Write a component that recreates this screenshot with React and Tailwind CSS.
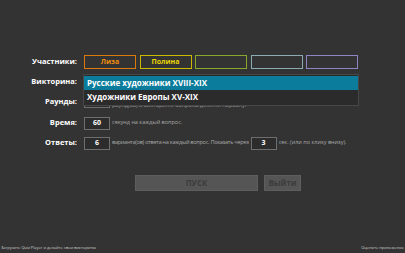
import { useState } from "react"

const players = [
  { name: "Лиза", border: "border-[#d97a0a]", text: "text-[#f08c10]" },
  { name: "Полина", border: "border-[#c9b800]", text: "text-[#e8d400]" },
  { name: "", border: "border-[#87a82c]", text: "text-[#87a82c]" },
  { name: "", border: "border-[#8aaab4]", text: "text-[#8aaab4]" },
  { name: "", border: "border-[#9283c4]", text: "text-[#9283c4]" },
]

const quizzes = ["Русские художники XVIII-XIX", "Художники Европы XV-XIX"]

function Label({ children }) {
  return <div className="text-right text-[7.5px] font-bold text-white leading-none">{children}</div>
}

function NumberBox({ value }) {
  return (
    <div className="flex h-[13px] w-[26px] shrink-0 items-center justify-center border border-[#6e6e6e] bg-[#2c2c2c] text-[7px] font-bold text-white">
      {value}
    </div>
  )
}

function Hint({ children, tight }) {
  return (
    <span className={`text-[5.5px] text-[#a9a9a9] leading-none whitespace-nowrap ${tight ? "tracking-[-0.25px]" : ""}`}>
      {children}
    </span>
  )
}

export default function App() {
  const [selected] = useState(0)

  return (
    <div className="flex h-[253px] w-[405px] flex-col overflow-hidden bg-[#333333] font-['Open_Sans',sans-serif]">
      <div className="flex flex-col gap-[6px] pt-[55px]">
        {/* participants */}
        <div className="grid h-[14px] grid-cols-[77px_1fr] items-center gap-[7px]">
          <Label>Участники:</Label>
          <div className="flex gap-[3.5px]">
            {players.map((p, i) => (
              <div
                key={i}
                className={`flex h-[14px] w-[52px] items-center justify-center border ${p.border} ${p.text} text-[7px] font-bold`}
              >
                {p.name}
              </div>
            ))}
          </div>
        </div>

        {/* quiz select, opened */}
        <div className="grid h-[14px] grid-cols-[77px_1fr] items-center gap-[7px]">
          <Label>Викторина:</Label>
          <div className="relative h-[14px]">
            <div className="absolute left-[-1px] top-[-1px] z-10 flex w-[276px] flex-col border border-[#474747] bg-[#2b2b2b] py-[1px]">
              {quizzes.map((q, i) => (
                <div
                  key={q}
                  className={`flex h-[14px] items-center px-[3px] text-[8px] font-bold text-white ${i === selected ? "bg-[#0b7c9c]" : ""}`}
                >
                  {q}
                </div>
              ))}
            </div>
          </div>
        </div>

        {/* rounds */}
        <div className="grid h-[14px] grid-cols-[77px_1fr] items-center gap-[7px]">
          <Label>Раунды:</Label>
          <div className="flex items-end gap-[2px] pb-[1px]">
            <NumberBox value="1" />
            <Hint>раунд(ов) в викторине, вопросы делятся поровну.</Hint>
          </div>
        </div>

        {/* time */}
        <div className="mt-[1px] grid h-[14px] grid-cols-[77px_1fr] items-center gap-[7px]">
          <Label>Время:</Label>
          <div className="flex items-center gap-[2px]">
            <NumberBox value="60" />
            <Hint>секунд на каждый вопрос.</Hint>
          </div>
        </div>

        {/* answers */}
        <div className="grid h-[14px] grid-cols-[77px_1fr] items-center gap-[7px]">
          <Label>Ответы:</Label>
          <div className="flex items-center gap-[2px]">
            <NumberBox value="6" />
            <Hint tight>варианта(ов) ответа на каждый вопрос. Показать через</Hint>
            <NumberBox value="3" />
            <Hint>сек. (или по клику внизу).</Hint>
          </div>
        </div>
      </div>

      <div className="ml-[135px] mt-[25px] flex gap-[6px]">
        <button className="h-[16px] w-[123px] border border-[#5e5e5e] bg-[#555555] text-[8px] font-bold text-[#3c3c3c]">
          ПУСК
        </button>
        <button className="h-[16px] w-[37px] border border-[#5e5e5e] bg-[#555555] text-[8px] font-bold text-[#3c3c3c]">
          Выйти
        </button>
      </div>

      <div className="mt-auto flex items-end justify-between px-[1px] pb-[3px] text-[4px] leading-none text-[#d0d0d0]">
        <span>Загрузите Quiz Player и делайте свои викторины</span>
        <span>Оцените приложение</span>
      </div>
    </div>
  )
}
